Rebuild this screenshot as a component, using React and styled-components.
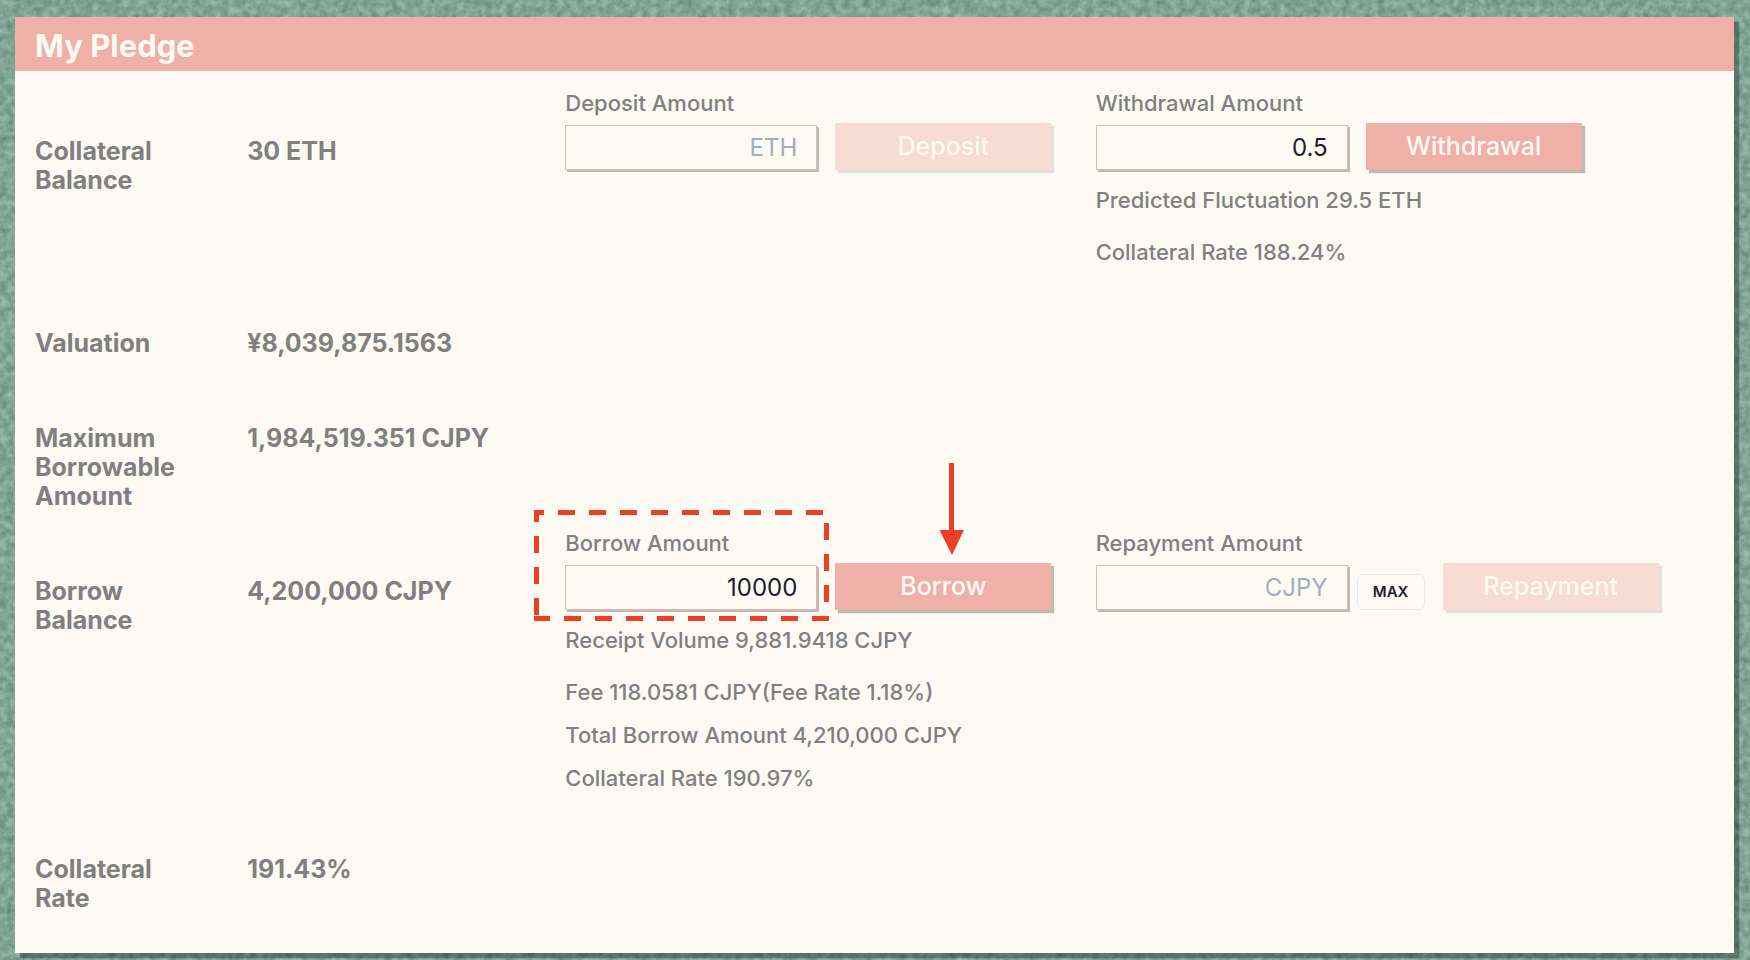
import React, { useState } from "react";
import styled, { createGlobalStyle } from "styled-components";

const GlobalStyle = createGlobalStyle`
  *, *::before, *::after { box-sizing: border-box; }
  body {
    margin: 0;
    background: #7fa595;
    color: #808080;
    font-family: Inter, "Liberation Sans", sans-serif;
  }
  h1, h2, p { margin: 0; }
`;

const Page = styled.div`
  display: grid;
  grid-template-columns: minmax(0, 1fr);
  min-height: 100vh;
`;

const Texture = styled.svg`
  grid-area: 1 / 1;
  display: block;
  width: 100%;
  height: 100%;
`;

const Panel = styled.main`
  grid-area: 1 / 1;
  z-index: 1;
  margin: 17px 16px 7px 15px;
  background: #fdfaf3;
  box-shadow: 5px 5px 1px rgba(0, 0, 0, 0.3);
`;

const PanelHeader = styled.header`
  padding: 9px 20px 5px;
  background: #eeb0a7;
`;

const PanelTitle = styled.h1`
  color: #fdfaf3;
  font-size: 31px;
  font-weight: 700;
  line-height: 40px;
`;

const Row = styled.section`
  display: grid;
  grid-template-columns: 2fr 3fr 5fr 6fr;
  padding: 0 2px 0 20px;
`;

const RowTitle = styled.h2`
  padding: 66px 60px 0 0;
  font-size: 25px;
  font-weight: 700;
  line-height: 29px;
`;

const RowValue = styled.p`
  padding-top: 66px;
  font-size: 25px;
  font-weight: 700;
  line-height: 29px;
  white-space: nowrap;
`;

const Operation = styled.form`
  padding-top: 21px;
`;

const Controls = styled.div`
  display: flex;
  align-items: flex-end;
  gap: 18px;
`;

const InputGroup = styled.div`
  display: flex;
  align-items: flex-end;
  gap: 9px;
`;

const Field = styled.div`
  position: relative;
  display: flex;
  flex-direction: column;
  gap: 11px;
`;

const FieldLabel = styled.label`
  font-size: 22px;
  font-weight: 500;
  line-height: 22px;
`;

const AmountInput = styled.input`
  width: 252px;
  height: 45px;
  padding: 0 19px;
  border: 1px solid #eeb0a7;
  border-radius: 0;
  outline: none;
  background: #fdfaf3;
  box-shadow: 2px 2px 0 rgba(0, 0, 0, 0.25);
  color: #1a202c;
  font: 400 24px Inter, "Liberation Sans", sans-serif;
  text-align: right;

  &::placeholder {
    color: #a0aec0;
    opacity: 1;
  }
`;

const ActionButton = styled.button`
  width: 216px;
  height: 47px;
  padding: 0 0 2px;
  border: 0;
  background: #eeb0a7;
  box-shadow: 3px 3px 1px rgba(0, 0, 0, 0.25);
  color: #fdfaf3;
  font: 500 25px Inter, "Liberation Sans", sans-serif;
  cursor: pointer;

  &:disabled {
    opacity: 0.4;
    cursor: not-allowed;
  }
`;

const ButtonAnchor = styled.div`
  position: relative;
  display: flex;
`;

const MaxButton = styled.button`
  width: 68px;
  height: 36px;
  padding: 0 0 2px;
  border: 1px solid #e2e8f0;
  border-radius: 6px;
  background: transparent;
  color: #1a202c;
  font: 600 15px Inter, "Liberation Sans", sans-serif;
  cursor: pointer;
`;

const Notes = styled.div`
  display: flex;
  flex-direction: column;
  gap: 21px;
  padding-top: 19px;
`;

const Note = styled.p`
  font-size: 22px;
  font-weight: 500;
  line-height: 22px;
  white-space: nowrap;

  &:first-child {
    margin-bottom: 9px;
  }
`;

const LastRow = styled(Row)`
  padding-bottom: 40px;
`;

const HighlightFrame = styled.svg`
  position: absolute;
  top: -22px;
  left: -31px;
  pointer-events: none;
`;

const PointerArrow = styled.svg`
  position: absolute;
  top: -100px;
  left: 104px;
  pointer-events: none;
`;

function Highlight() {
  return (
    <HighlightFrame width="295" height="111" viewBox="0 0 295 111" fill="none" stroke="#eb4026" strokeWidth="5" aria-hidden="true">
      <path d="M0 2.5H10" />
      <path d="M24 2.5H290" strokeDasharray="17 14" />
      <path d="M292.500 13V93" strokeDasharray="17 14" />
      <path d="M0 108.500H16" />
      <path d="M30 108.500H295" strokeDasharray="17 14" />
      <path d="M2.500 0V12" />
      <path d="M2.500 26V106" strokeDasharray="17 14" />
    </HighlightFrame>
  );
}

function Arrow() {
  return (
    <PointerArrow width="26" height="92" viewBox="0 0 26 92" fill="#eb4026" aria-hidden="true">
      <path d="M10 0H15V67H25L13 92L0.500 67H10Z" />
    </PointerArrow>
  );
}

function AmountOperation({ id, label, unit, initial = "", action, max, notes, highlighted, pointed }) {
  const [amount, setAmount] = useState(initial);
  return (
    <Operation onSubmit={(event) => event.preventDefault()}>
      <Controls>
        <InputGroup>
          <Field>
            <FieldLabel htmlFor={id}>{label}</FieldLabel>
            <AmountInput
              id={id}
              type="text"
              inputMode="decimal"
              placeholder={unit}
              value={amount}
              onChange={(event) => setAmount(event.target.value)}
            />
            {highlighted && <Highlight />}
          </Field>
          {max && (
            <MaxButton type="button" onClick={() => setAmount(max)}>
              MAX
            </MaxButton>
          )}
        </InputGroup>
        <ButtonAnchor>
          <ActionButton type="submit" disabled={!amount}>
            {action}
          </ActionButton>
          {pointed && <Arrow />}
        </ButtonAnchor>
      </Controls>
      {notes && (
        <Notes>
          {notes.map((note) => (
            <Note key={note}>{note}</Note>
          ))}
        </Notes>
      )}
    </Operation>
  );
}

export default function App() {
  return (
    <>
      <GlobalStyle />
      <Page>
        <Texture aria-hidden="true">
          <filter id="felt" x="0" y="0" width="100%" height="100%" colorInterpolationFilters="sRGB">
            <feTurbulence type="fractalNoise" baseFrequency="0.14" numOctaves="3" seed="8" />
            <feColorMatrix values="0.3 0 0 0 0.35  0.27 0 0 0 0.51  0.28 0 0 0 0.445  0 0 0 0 1" />
          </filter>
          <rect width="100%" height="100%" filter="url(#felt)" />
        </Texture>
        <Panel>
          <PanelHeader>
            <PanelTitle>My Pledge</PanelTitle>
          </PanelHeader>
          <Row>
            <RowTitle>Collateral Balance</RowTitle>
            <RowValue>30 ETH</RowValue>
            <AmountOperation id="deposit" label="Deposit Amount" unit="ETH" action="Deposit" />
            <AmountOperation
              id="withdrawal"
              label="Withdrawal Amount"
              unit="ETH"
              initial="0.5"
              action="Withdrawal"
              notes={["Predicted Fluctuation 29.5 ETH", "Collateral Rate 188.24%"]}
            />
          </Row>
          <Row>
            <RowTitle>Valuation</RowTitle>
            <RowValue>¥8,039,875.1563</RowValue>
          </Row>
          <Row>
            <RowTitle>Maximum Borrowable Amount</RowTitle>
            <RowValue>1,984,519.351 CJPY</RowValue>
          </Row>
          <Row>
            <RowTitle>Borrow Balance</RowTitle>
            <RowValue>4,200,000 CJPY</RowValue>
            <AmountOperation
              id="borrow"
              label="Borrow Amount"
              unit="CJPY"
              initial="10000"
              action="Borrow"
              highlighted
              pointed
              notes={[
                "Receipt Volume 9,881.9418 CJPY",
                "Fee 118.0581 CJPY(Fee Rate 1.18%)",
                "Total Borrow Amount 4,210,000 CJPY",
                "Collateral Rate 190.97%",
              ]}
            />
            <AmountOperation id="repayment" label="Repayment Amount" unit="CJPY" action="Repayment" max="4200000" />
          </Row>
          <LastRow>
            <RowTitle>Collateral Rate</RowTitle>
            <RowValue>191.43%</RowValue>
          </LastRow>
        </Panel>
      </Page>
    </>
  );
}
